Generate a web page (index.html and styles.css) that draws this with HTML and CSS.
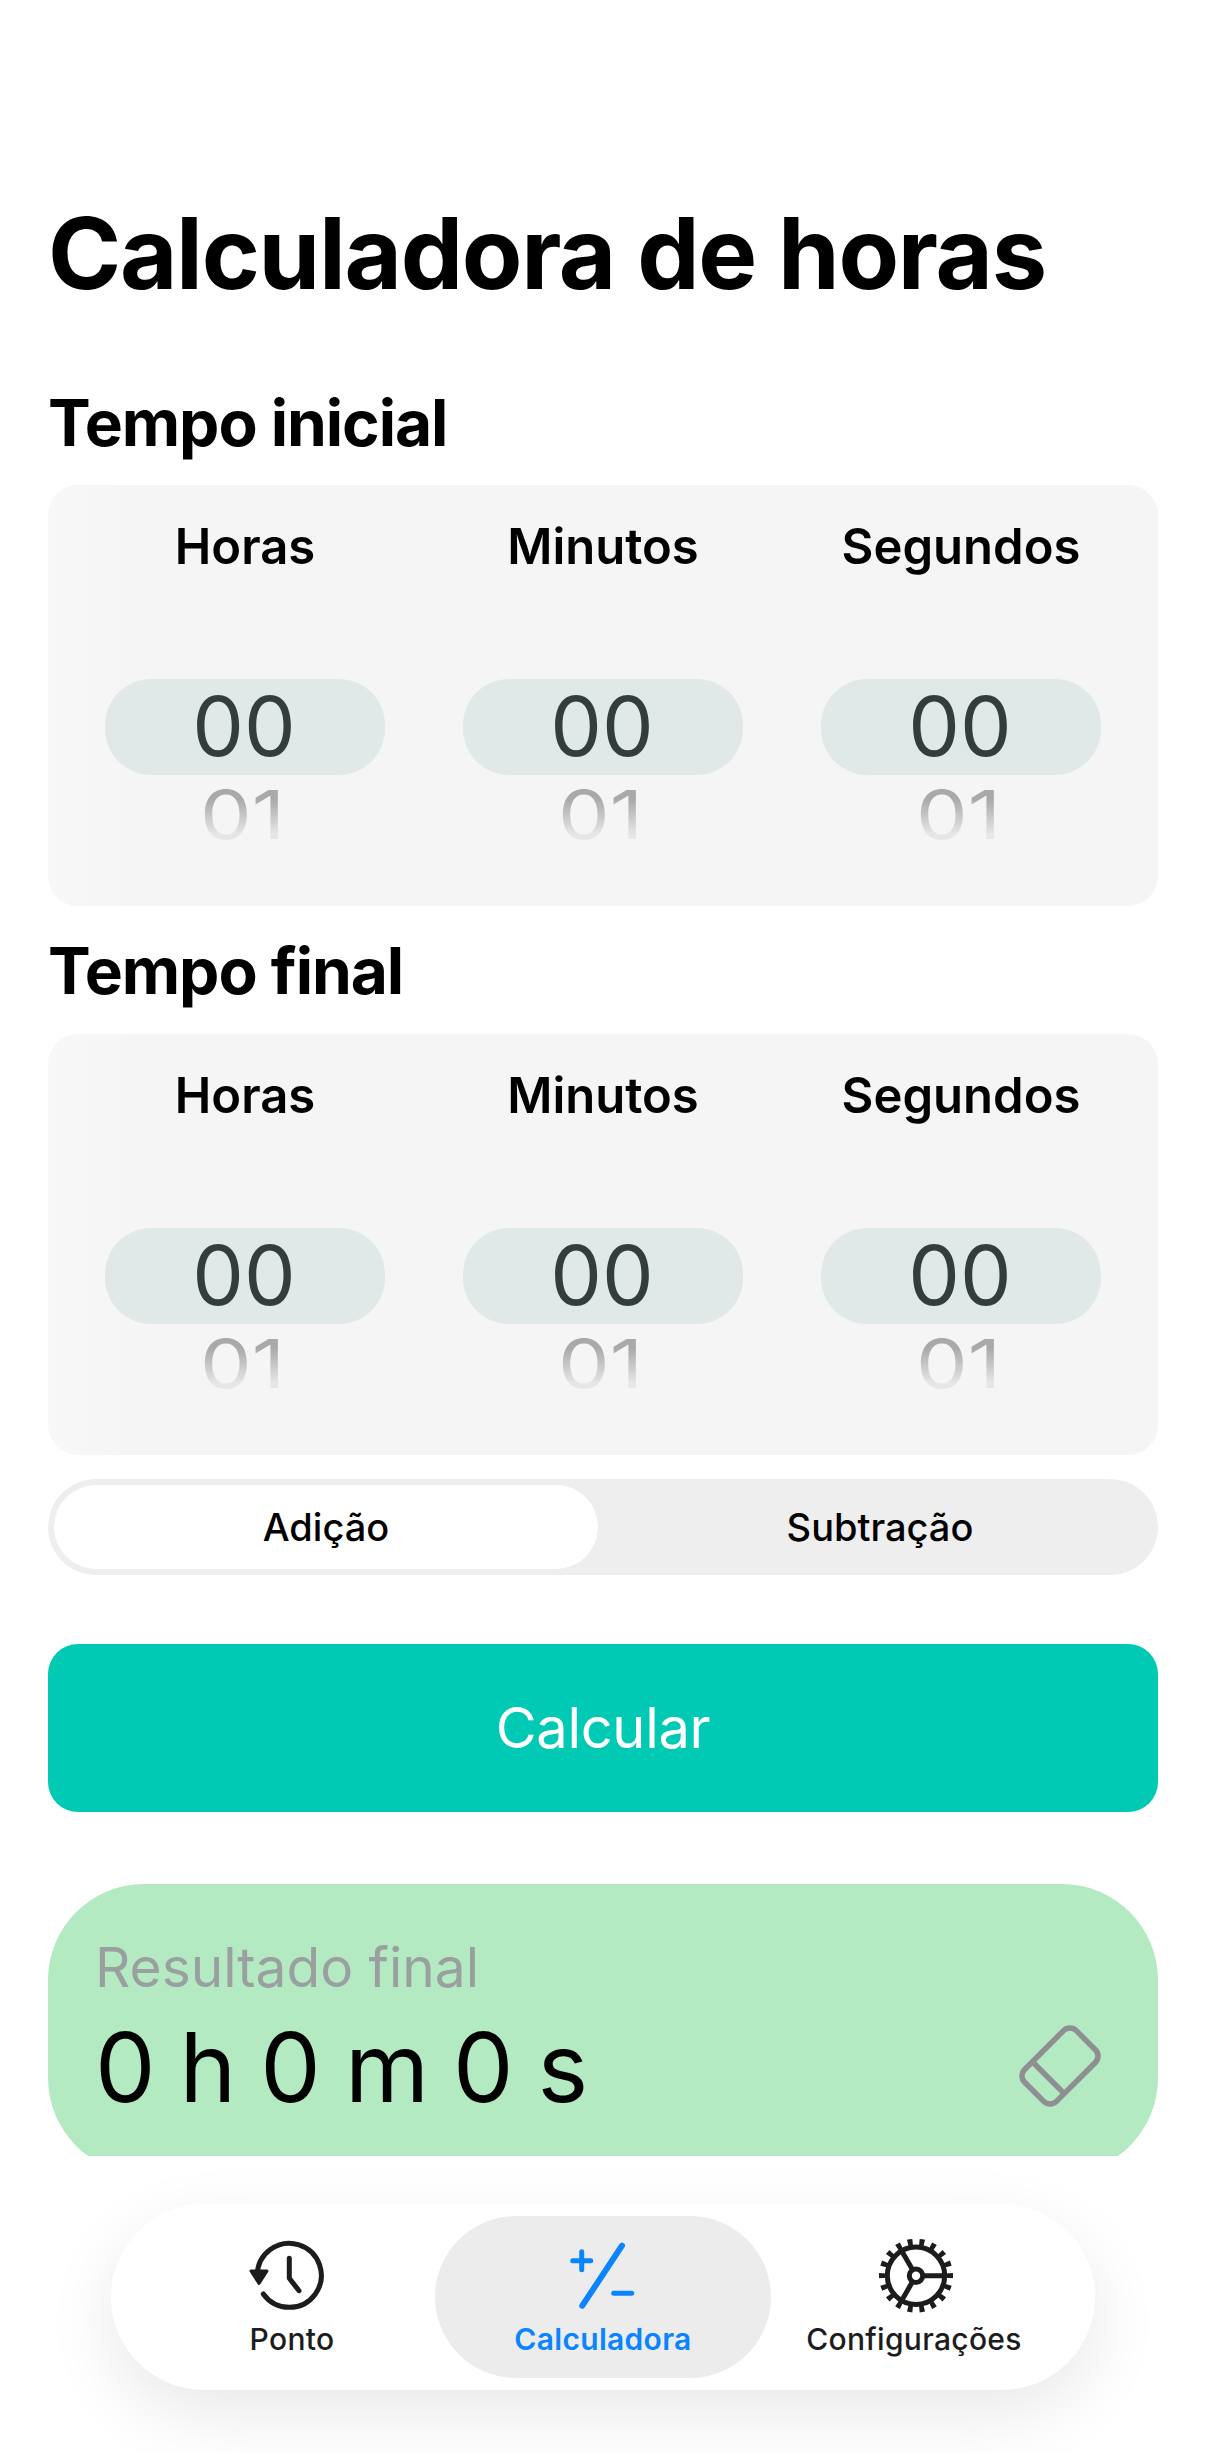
FILE: index.html
```html
<!DOCTYPE html>
<html lang="pt-BR">
<head>
    <meta charset="UTF-8">
    <title>Calculadora de horas</title>
    <link rel="stylesheet" href="styles.css">
</head>
<body>
    <div class="screen">
        <div class="content">
            <h1 class="title">Calculadora de horas</h1>

            <div class="section">
                <h2>Tempo inicial</h2>
                <div class="picker-card">
                    <div class="picker-col">
                        <div class="picker-label">Horas</div>
                        <div class="picker-current">00</div>
                        <div class="picker-next">01</div>
                    </div>
                    <div class="picker-col">
                        <div class="picker-label">Minutos</div>
                        <div class="picker-current">00</div>
                        <div class="picker-next">01</div>
                    </div>
                    <div class="picker-col">
                        <div class="picker-label">Segundos</div>
                        <div class="picker-current">00</div>
                        <div class="picker-next">01</div>
                    </div>
                </div>
            </div>

            <div class="section">
                <h2>Tempo final</h2>
                <div class="picker-card">
                    <div class="picker-col">
                        <div class="picker-label">Horas</div>
                        <div class="picker-current">00</div>
                        <div class="picker-next">01</div>
                    </div>
                    <div class="picker-col">
                        <div class="picker-label">Minutos</div>
                        <div class="picker-current">00</div>
                        <div class="picker-next">01</div>
                    </div>
                    <div class="picker-col">
                        <div class="picker-label">Segundos</div>
                        <div class="picker-current">00</div>
                        <div class="picker-next">01</div>
                    </div>
                </div>
            </div>

            <div class="segmented">
                <div class="segment segment-active">Adição</div>
                <div class="segment">Subtração</div>
            </div>

            <button class="calc-button" type="button">Calcular</button>

            <div class="result-card">
                <div class="result-text">
                    <div class="result-label">Resultado final</div>
                    <div class="result-value">0 h 0 m 0 s</div>
                </div>
                <svg class="eraser" viewBox="0 0 90 90">
                    <g transform="rotate(-45 45 45)">
                        <rect x="8.5" y="22.5" width="73" height="45" rx="9"/>
                        <line x1="28.5" y1="22.5" x2="28.5" y2="67.5"/>
                    </g>
                </svg>
            </div>
        </div>

        <div class="tabbar">
            <nav class="tabs">
                <div class="tab">
                    <svg class="tab-icon" viewBox="0 0 80 80">
                        <path d="M11.3 58A32 32 0 1 0 5.3 39.7"/>
                        <path d="M37.3 22.3V42.3L47 54.7"/>
                        <path class="solid" d="M-1 35H15L7 47.5Z"/>
                    </svg>
                    <span class="tab-label">Ponto</span>
                </div>
                <div class="tab tab-active">
                    <svg class="tab-icon" viewBox="0 0 80 80">
                        <path class="thick" d="M59 9.7L19.3 69.7"/>
                        <path d="M9.7 24.7H27.7M18.7 15.7V33.7"/>
                        <path d="M50.7 57.3H68.7"/>
                    </svg>
                    <span class="tab-label">Calculadora</span>
                </div>
                <div class="tab">
                    <svg class="tab-icon" viewBox="0 0 80 80">
                        <circle cx="42" cy="39.7" r="28.7"/>
                        <circle class="teeth" cx="42" cy="39.7" r="33" pathLength="18"/>
                        <circle cx="42" cy="39.7" r="6.7"/>
                        <path d="M50 39.7H70M38 32.8L28 15.5M38 46.6L28 63.9"/>
                    </svg>
                    <span class="tab-label">Configurações</span>
                </div>
            </nav>
        </div>
    </div>
</body>
</html>
```

FILE: styles.css
```css
/* Reset */
* {
    box-sizing: border-box;
    margin: 0;
    padding: 0;
}

body {
    font-family: Inter, "Liberation Sans", sans-serif;
    background: white;
    color: black;
}

.screen {
    width: 1206px;
    height: 2453px;
    overflow: hidden;
}

/* Scroll area, cut off above the tab bar */
.content {
    height: 2156px;
    padding: 198px 48px 0;
    overflow: hidden;
}

.title {
    font-size: 99px;
    font-weight: 700;
    line-height: 110px;
    letter-spacing: -1.3px;
    margin-bottom: 75px;
}

.section + .section {
    margin-top: 25px;
}

.section h2 {
    font-size: 64px;
    font-weight: 700;
    line-height: 80px;
    letter-spacing: -1.05px;
    margin-bottom: 22px;
}

.section + .section h2 {
    margin-bottom: 23px;
}

/* Time pickers */
.picker-card {
    display: grid;
    grid-template-columns: repeat(3, 280px);
    gap: 78px;
    height: 421px;
    padding: 32px 57px 0;
    background: linear-gradient(90deg, #f8f8f8, #f5f5f5 8%);
    border-radius: 30px;
}

.picker-col {
    display: flex;
    flex-direction: column;
    align-items: center;
}

.picker-label {
    font-size: 49px;
    font-weight: 600;
    line-height: 60px;
    margin-bottom: 102px;
}

.picker-current {
    width: 280px;
    height: 96px;
    padding-right: 2px;
    background: #e1e9e8;
    border-radius: 46px;
    color: #333d3c;
    font-size: 82px;
    line-height: 96px;
    text-align: center;
}

.picker-next {
    margin-top: 7px;
    margin-right: 5px;
    font-size: 82px;
    line-height: 66px;
    transform: scaleY(0.82);
    background: linear-gradient(#a9a9a9 20%, #e6e6e6 85%);
    -webkit-background-clip: text;
    background-clip: text;
    color: transparent;
}

/* Adição / Subtração */
.segmented {
    display: flex;
    height: 96px;
    margin-top: 24px;
    padding: 6px;
    background: #eeeeee;
    border-radius: 48px;
}

.segment {
    flex: 1;
    padding-left: 10px;
    font-size: 38px;
    font-weight: 500;
    line-height: 84px;
    text-align: center;
}

.segment-active {
    flex: 0 0 544px;
    padding-left: 0;
    background: white;
    border-radius: 42px;
}

.calc-button {
    display: block;
    width: 100%;
    height: 168px;
    margin-top: 69px;
    background: #00cab4;
    color: white;
    border: none;
    border-radius: 30px;
    font-family: inherit;
    font-size: 56px;
    letter-spacing: -0.3px;
}

/* Result */
.result-card {
    display: flex;
    justify-content: space-between;
    align-items: flex-start;
    height: 290px;
    margin-top: 72px;
    padding: 48px 53px 0 47px;
    background: #b4eac2;
    border-radius: 96px;
}

.result-label {
    color: #9a9f9f;
    font-size: 55px;
    line-height: 70px;
    margin-bottom: 10px;
}

.result-value {
    font-size: 96px;
    line-height: 110px;
    word-spacing: -3px;
}

.eraser {
    width: 90px;
    height: 90px;
    margin-top: 89px;
    fill: none;
    stroke: #8e8e93;
    stroke-width: 5.5;
}

/* Tab bar */
.tabbar {
    height: 297px;
    padding-top: 48px;
    overflow: hidden;
}

.tabs {
    display: flex;
    width: 984px;
    height: 186px;
    margin: 0 auto;
    padding: 12px 38px;
    background: white;
    border-radius: 93px;
    box-shadow: 0 24px 70px rgba(0, 0, 0, 0.09);
}

.tab {
    display: flex;
    flex-direction: column;
    align-items: center;
    flex: 0 0 286px;
    padding-top: 20px;
    color: #1c1c1e;
}

.tab-active {
    flex-basis: 336px;
    background: #ececec;
    border-radius: 81px;
    color: #0a84ff;
}

.tab-icon {
    width: 80px;
    height: 80px;
    margin-bottom: 5px;
    overflow: visible;
    fill: none;
    stroke: currentColor;
    stroke-width: 5;
    stroke-linecap: round;
    stroke-linejoin: round;
}

.tab-icon .solid {
    fill: currentColor;
    stroke-width: 3;
}

.tab-icon .thick {
    stroke-width: 6;
}

.tab-icon .teeth {
    stroke-width: 8;
    stroke-linecap: butt;
    stroke-dasharray: 0.42 0.58;
    stroke-dashoffset: 0.21;
}

.tab-label {
    font-size: 30px;
    font-weight: 500;
    line-height: 36px;
    letter-spacing: 0.3px;
}

.tab-active .tab-label {
    font-weight: 600;
}
```
